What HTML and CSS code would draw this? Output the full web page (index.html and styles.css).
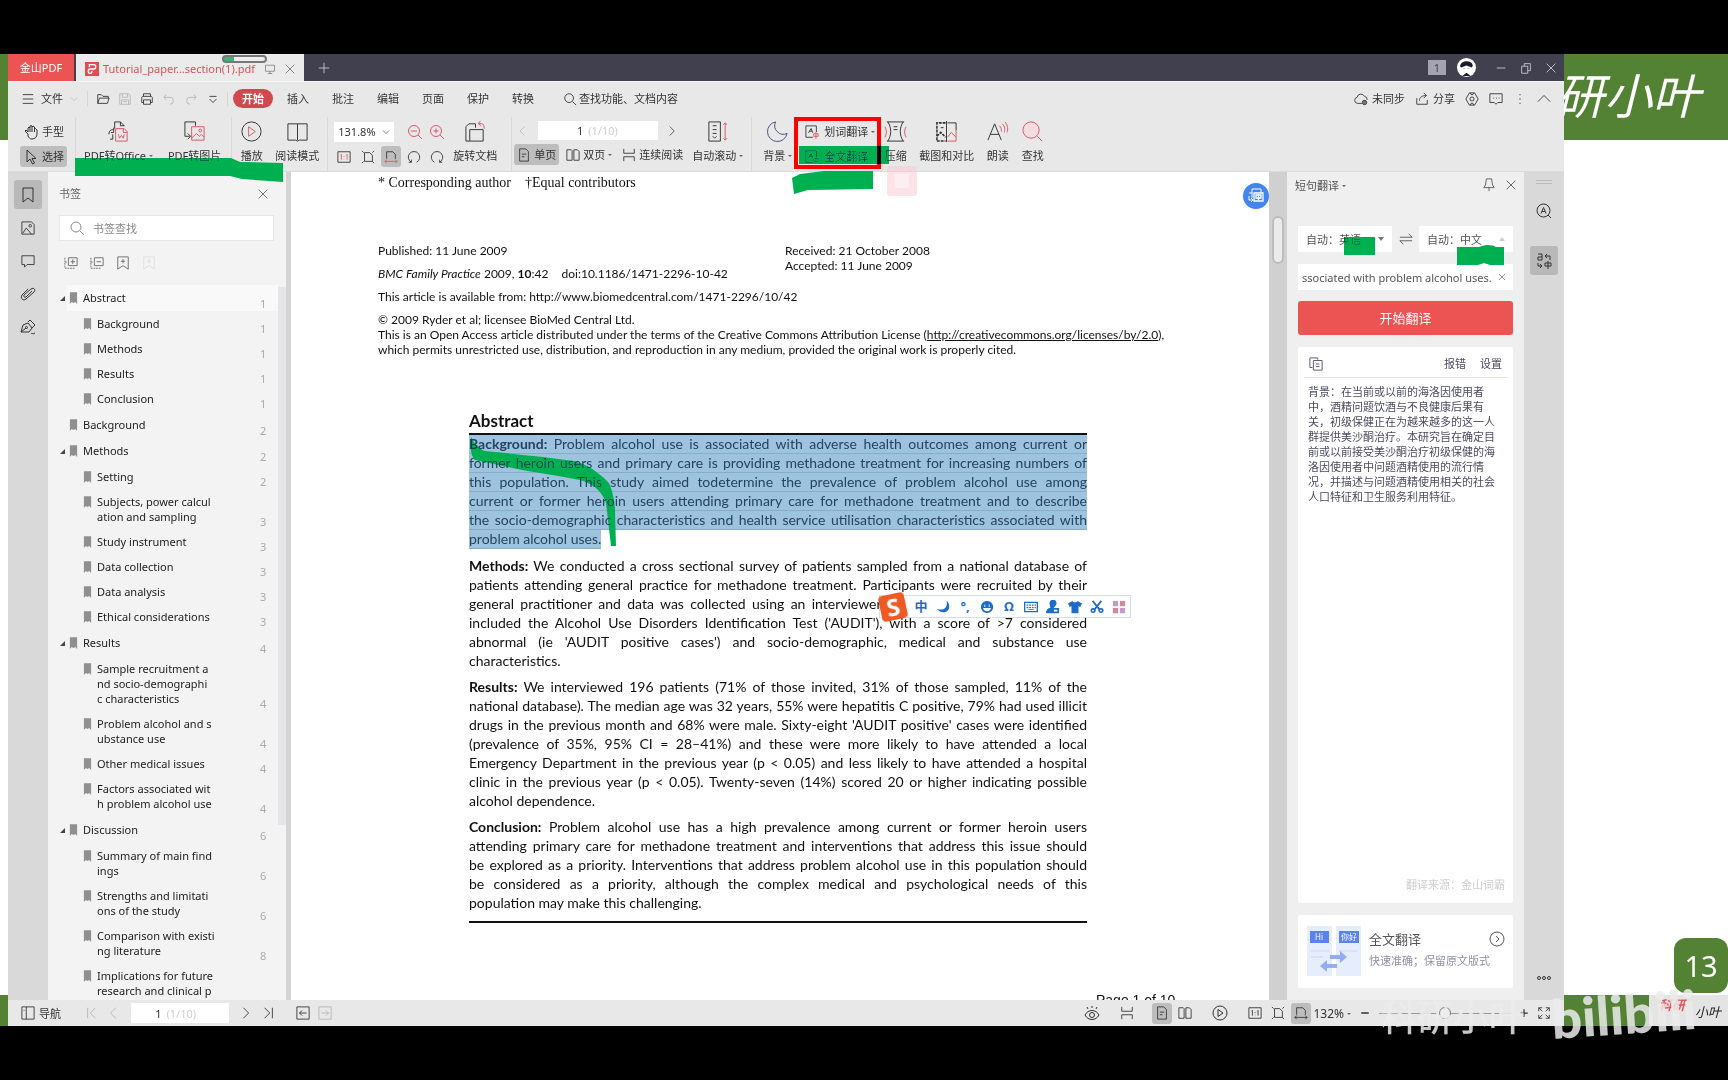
FILE: index.html
```html
<!DOCTYPE html>
<html lang="zh-CN">

<head>
    <meta charset="UTF-8">
    <meta name="viewport" content="width=device-width, initial-scale=1.0">
    <title>Tutorial_paper...section(1).pdf</title>
    <link rel="stylesheet" href="styles.css">
</head>

<body>
    <!-- icon sheet -->
    <svg class="sheet" aria-hidden="true">
        <symbol id="menu" viewBox="0 0 16 16"><path d="M2 3h12M2 8h12M2 13h12" /></symbol>
        <symbol id="down" viewBox="0 0 16 16"><path d="M3 5.500l5 5 5-5" /></symbol>
        <symbol id="up" viewBox="0 0 16 16"><path d="M1 11l7-7 7 7" /></symbol>
        <symbol id="left" viewBox="0 0 16 16"><path d="M10 2L4 8l6 6" /></symbol>
        <symbol id="right" viewBox="0 0 16 16"><path d="M5 2l6 6-6 6" /></symbol>
        <symbol id="first" viewBox="0 0 16 16"><path d="M3 2v12M12 2L6 8l6 6" /></symbol>
        <symbol id="last" viewBox="0 0 16 16"><path d="M13 2v12M4 2l6 6-6 6" /></symbol>
        <symbol id="close" viewBox="0 0 16 16"><path d="M3 3l10 10M13 3L3 13" /></symbol>
        <symbol id="plus" viewBox="0 0 16 16"><path d="M8 2v12M2 8h12" /></symbol>
        <symbol id="minus" viewBox="0 0 16 16"><path d="M3 8h10" /></symbol>
        <symbol id="restore" viewBox="0 0 16 16"><path d="M3 6h7v8H3zM6 6V3h7v8h-3" /></symbol>
        <symbol id="screen" viewBox="0 0 16 16"><path d="M2 3h12v8H2zM8 11v3M5 14h6" /></symbol>
        <symbol id="open" viewBox="0 0 16 16"><path d="M2 13V3h4l2 2h6v2M2 13l2-6h11l-2 6z" /></symbol>
        <symbol id="save" viewBox="0 0 16 16"><path d="M2 2h10l2 2v10H2zM5 2v4h6V2M4 14V9h8v5M6 11h4" /></symbol>
        <symbol id="print" viewBox="0 0 16 16"><path d="M4 5V2h8v3M4 12H2V6l1-1h10l1 1v6h-2M4 9h8v5H4z" /></symbol>
        <symbol id="undo" viewBox="0 0 16 16"><path d="M5 3L2 6l3 3M2 6h7a4 4 0 0 1 0 8" /></symbol>
        <symbol id="redo" viewBox="0 0 16 16"><path d="M11 3l3 3-3 3M14 6H7a4 4 0 0 0 0 8" /></symbol>
        <symbol id="more" viewBox="0 0 16 16"><path d="M4 5h8M4 8l4 4 4-4" /></symbol>
        <symbol id="search" viewBox="0 0 16 16"><circle cx="7" cy="7" r="5" /><path d="M11 11l4 4" /></symbol>
        <symbol id="cloud" viewBox="0 0 16 16"><path d="M9 13H4a3.500 3.500 0 0 1-.5-6.900A4.500 4.500 0 0 1 12 5a3.500 3.500 0 0 1 3 4" /><circle cx="12" cy="12" r="2.500" fill="#777" /></symbol>
        <symbol id="share" viewBox="0 0 16 16"><path d="M2 7v7h12V9M5 10c0-4 3-6 8-6M10 1l3 3-3 3" /></symbol>
        <symbol id="gear" viewBox="0 0 16 16"><path d="M5 1h6l4 7-4 7H5L1 8zM6 1l1 2h2l1-2M6 15l1-2h2l1 2" /><circle cx="8" cy="8" r="2.300" /></symbol>
        <symbol id="chat" viewBox="0 0 16 16"><path d="M1 2h14v10h-5l-2 2-2-2H1zM5 7h1M8 7h1M11 7h1" /></symbol>
        <symbol id="kebab" viewBox="0 0 16 16"><path d="M7.500 3h1M7.500 8h1M7.500 13h1" stroke-width="1.500" /></symbol>
        <symbol id="hand" viewBox="0 0 16 16"><path d="M5 10L2 7l1-1 2 2V4l1-1 1 1V2l1.500-.5L9 3l1-1 1.500 1v2l1-.5L14 6v4c0 3-2 5-5 5-2 0-3-1-4-3zM7 4v4M9 3v5M11.500 4v4" /></symbol>
        <symbol id="arrow" viewBox="0 0 16 16"><path d="M4 1v12l3-3 2.500 5 2-1L9 9.500h4z" /></symbol>
        <symbol id="office" viewBox="0 0 24 24"><path d="M8 9V2h6l4 4M14 2v4h4M2 15c0-4 2-5 5-5M7 8v5H4M6 15v5H3" /><path class="red" d="M9 9h9l3 3v10H9zM17 9v4h4M12 15l1 4 2-3 2 3 1-4" /></symbol>
        <symbol id="toimg" viewBox="0 0 24 24"><path d="M13 6V2H2v15h5M5 14l3 3-3 3" /><path class="red" d="M9 7h13v14H9zM9 19l5-5 3 3 2-2 3 3" /><circle class="red" cx="18" cy="11" r="1.500" /></symbol>
        <symbol id="play" viewBox="0 0 24 24"><circle cx="12" cy="12" r="10" /><path class="red" d="M9 7l7 5-7 5z" /></symbol>
        <symbol id="book" viewBox="0 0 24 24"><path d="M12 4H2v17h8l2 1 2-1h8V4H12v17" /></symbol>
        <symbol id="zoomout" viewBox="0 0 16 16"><circle class="red" cx="7" cy="7" r="5.500" /><path class="red" d="M11 11l4 4M4 7h6" /></symbol>
        <symbol id="zoomin" viewBox="0 0 16 16"><circle class="red" cx="7" cy="7" r="5.500" /><path class="red" d="M11 11l4 4M4.500 7h5M7 4.500v5" /></symbol>
        <symbol id="one" viewBox="0 0 16 16"><path d="M1 2h14v12H1z" /><path class="red" d="M4 6l1-1v6M10.500 6l1-1v6M8 7v1M8 10v.5" /></symbol>
        <symbol id="fit" viewBox="0 0 16 16"><path d="M4 3h6l3 3v7H4zM1 1l2 2M15 1l-2 2M1 15l2-2M15 15l-2-2" /></symbol>
        <symbol id="wide" viewBox="0 0 16 16"><path d="M3 10V2h7l3 3v5" /><path class="red" d="M1 13h14M3 11l-2 2 2 2M13 11l2 2-2 2" /></symbol>
        <symbol id="rotl" viewBox="0 0 16 16"><path d="M5 14a6.500 6.500 0 1 1 6 0M2 14h3v-3" /></symbol>
        <symbol id="rotr" viewBox="0 0 16 16"><path d="M11 14a6.500 6.500 0 1 0-6 0M14 14h-3v-3" /></symbol>
        <symbol id="rotdoc" viewBox="0 0 24 24"><path d="M12 8V4H5L2 7v15h4M6 10h14v12H6z" /><path class="red" d="M17 1l-2 3 3 2M15 4c4-1 6 0 6 5" /></symbol>
        <symbol id="page" viewBox="0 0 16 16"><path d="M3 1h7l3 3v11H3zM5.500 7h5M5.500 10h3" /></symbol>
        <symbol id="pages" viewBox="0 0 16 16"><path d="M1 2h5l1 1v11H1zM9 2h4l2 2v10H9z" /></symbol>
        <symbol id="cont" viewBox="0 0 16 16"><path d="M2 1v5h12V1M2 15v-5h12v5" /></symbol>
        <symbol id="scroll" viewBox="0 0 24 24"><path d="M3 2h12v20H3zM7 6h4M7 10h4M7 14h4M7 17l2 2 2-2" /><path class="red" d="M20 3v18M18 5l2-2 2 2M18 19l2 2 2-2" /></symbol>
        <symbol id="moon" viewBox="0 0 24 24"><path d="M10 2a9 9 0 0 0 12 12A10.300 10.300 0 1 1 10 2z" stroke="#45507a" /></symbol>
        <symbol id="trans" viewBox="0 0 16 16"><path d="M9 14H1V1h12v7M4 9l3-5 2 5M5 7h3" /><path class="red" d="M10 10h5v3h-5zM12.500 8v8" /></symbol>
        <symbol id="translate" viewBox="0 0 16 16"><path d="M4 10V1h9v4M4 5H1M1 8v4h4M3 10l2 2-2 2" /><path d="M6 5h9v8H6zM8 7h5v3H8zM10.500 6v6" stroke-width="1.300" /></symbol>
        <symbol id="press" viewBox="0 0 24 24"><path d="M3 2h18M3 22h18M4 2c4 6 4 14 0 20M20 2c-4 6-4 14 0 20M10 7h4M10 10h4" /><path class="red" d="M1 7c2 4 2 7 0 11M23 7c-2 4-2 7 0 11" /></symbol>
        <symbol id="shot" viewBox="0 0 24 24"><path d="M11 3H2v19h9M2 17l4-4 5 5" stroke-width="1.600" stroke-dasharray="3 1" /><path d="M12 1v22M6 8h3" /><path d="M13 3h9v8" /><path class="red" d="M22 11v11h-9M13 18l4-5 5 5" /></symbol>
        <symbol id="read" viewBox="0 0 24 24"><path d="M2 21L9 4l7 17M4.500 15h9" /><path class="red" d="M14 6c2 2 2 3 2 6M17 4c3 3 3 6 2 9M20 2c3 4 3 8 2 11" /></symbol>
        <symbol id="find" viewBox="0 0 24 24"><circle cx="10.500" cy="10.500" r="8.500" class="red" fill="#f5dcdf" /><path class="red" d="M17 17l5 5" /></symbol>
        <symbol id="mark" viewBox="0 0 16 16"><path d="M3 1h10v14l-5-4-5 4z" /></symbol>
        <symbol id="image" viewBox="0 0 16 16"><path d="M1 1h11l3 3v11H1zM2 14l4-6 6 7" /><circle cx="10.500" cy="5.500" r="1.500" /></symbol>
        <symbol id="note" viewBox="0 0 16 16"><path d="M1 2h14v10H7l-3 3v-3H1z" /></symbol>
        <symbol id="clip" viewBox="0 0 16 16"><path d="M12 5l-6 6c-1.500 1-3-1-2-2l7-6c3-2 5 1 3 3l-8 7c-3 2.500-6-1-4-4l6-6" /></symbol>
        <symbol id="pen" viewBox="0 0 16 16"><path d="M1 13l2-7 5-2 4 5-3 4zM8 3l2-2 5 5-3 3M1 13l5-4M11 15c1-2 2 1 4-1" /><circle cx="6.500" cy="8.500" r="1" /></symbol>
        <symbol id="expand" viewBox="0 0 16 16"><path d="M5 2h10v9H5zM10 4v5M7.500 6.500h5" /><path d="M1 2v12h12M1 7h2" stroke-dasharray="2 1" /></symbol>
        <symbol id="fold" viewBox="0 0 16 16"><path d="M5 2h10v9H5zM7.500 6.500h5" /><path d="M1 2v12h12M1 7h2" stroke-dasharray="2 1" /></symbol>
        <symbol id="addmark" viewBox="0 0 16 16"><path d="M2 1h12v14l-6-4-6 4zM8 3.500v5M5.500 6h5" /></symbol>
        <symbol id="flag" viewBox="0 0 10 14"><path d="M1 0h8v13l-2-2-2 1-2-1-2 2z" fill="#8f8f8f" stroke="none" /></symbol>
        <symbol id="pin" viewBox="0 0 16 16"><path d="M5 1h6l1 7 2 3H2l2-3zM8 11v4" /></symbol>
        <symbol id="swap" viewBox="0 0 16 16"><path d="M1 6h14l-4-4M15 10H1l4 4" /></symbol>
        <symbol id="copy" viewBox="0 0 16 16"><path d="M4 12H1V1h9v2M5 4h10v11H5zM8 8h4M8 11h4" /></symbol>
        <symbol id="asearch" viewBox="0 0 16 16"><circle cx="7.500" cy="7.500" r="6.500" /><path d="M5 10.500l2.500-6 2.500 6M6 8.500h3M12 12l3 3" /></symbol>
        <symbol id="lang" viewBox="0 0 16 16"><path d="M2 1h4v6H2V4h4M9 3h5v4M11 1L9 3l2 2M2 10v3h4M4 11l2 2-2 2M9 10h6v3H9zM12 8v8" /></symbol>
        <symbol id="dots" viewBox="0 0 16 16"><circle cx="3" cy="8" r="1.500" /><circle cx="8" cy="8" r="1.500" /><circle cx="13" cy="8" r="1.500" /></symbol>
        <symbol id="circright" viewBox="0 0 16 16"><circle cx="8" cy="8" r="7" /><path d="M7 5l3 3-3 3" /></symbol>
        <symbol id="circplay" viewBox="0 0 16 16"><circle cx="8" cy="8" r="7" /><path d="M6 4.500l5 3.500-5 3.500z" /></symbol>
        <symbol id="side" viewBox="0 0 16 16"><path d="M1 1h14v14H1zM6 1v14M3 5h1" /></symbol>
        <symbol id="back" viewBox="0 0 16 16"><path d="M1 1h14v14H1zM12 8H4M7 5L4 8l3 3" /></symbol>
        <symbol id="forth" viewBox="0 0 16 16"><path d="M1 1h14v14H1zM4 8h8M9 5l3 3-3 3" /></symbol>
        <symbol id="eye" viewBox="0 0 16 16"><path d="M1 10c3-6 11-6 14 0-3 6-11 6-14 0zM8 1v2M3 2l1 2M13 2l-1 2" /><circle cx="8" cy="10" r="2.500" /></symbol>
        <symbol id="full" viewBox="0 0 16 16"><path d="M2 6V2h4M2 2l4 4M10 2h4v4M14 2l-4 4M2 10v4h4M2 14l4-4M14 10v4h-4M14 14l-4-4" /></symbol>
    </svg>

    <div class="slide">
        <div class="band">科研小叶</div>
        <div class="pageno">13</div>
        <div class="foot">
            <div class="brand"><b>科研</b><span>小叶</span></div>
        </div>

        <div class="window">
            <!-- title bar with tabs -->
            <div class="titlebar">
                <button class="home">金山PDF</button>
                <div class="tab">
                    <svg class="pdf" viewBox="0 0 16 16"><path d="M0 0h16v16H0z" fill="#e64b50" stroke="none" /><path d="M5 6V3h5c3 0 3 5 0 5H6c-3 0-3 5 0 5 2 0 2-2 2-3" stroke="#fff" stroke-width="1.500" /></svg>
                    <span class="tabname">Tutorial_paper...section(1).pdf</span>
                    <svg class="i12"><use href="#screen" /></svg>
                    <button class="ib"><svg class="i14"><use href="#close" /></svg></button>
                    <i class="pill"></i>
                </div>
                <button class="ib add"><svg class="i14"><use href="#plus" /></svg></button>
                <div class="wincontrols">
                    <span class="count">1</span>
                    <svg class="avatar" viewBox="0 0 18 18"><circle cx="9" cy="9" r="9" fill="#fff" stroke="none" /><path d="M3 8c0-6 11-7 12-1l-1 2-5-2-5 2zM5 17l4-3 4 3z" fill="#1b1b2b" stroke="none" /><path d="M6 10h2M10 10h2" /></svg>
                    <button class="ib"><svg class="i14"><use href="#minus" /></svg></button>
                    <button class="ib"><svg class="i14"><use href="#restore" /></svg></button>
                    <button class="ib"><svg class="i14"><use href="#close" /></svg></button>
                </div>
            </div>

            <!-- menu -->
            <div class="menubar">
                <button class="ib file"><svg class="i14"><use href="#menu" /></svg>文件<svg class="i10 pale"><use href="#down" /></svg></button>
                <div class="quick">
                    <button class="ib"><svg class="i14"><use href="#open" /></svg></button>
                    <button class="ib pale"><svg class="i14"><use href="#save" /></svg></button>
                    <button class="ib"><svg class="i14"><use href="#print" /></svg></button>
                    <button class="ib pale"><svg class="i14"><use href="#undo" /></svg></button>
                    <button class="ib pale"><svg class="i14"><use href="#redo" /></svg></button>
                    <button class="ib"><svg class="i14"><use href="#more" /></svg></button>
                </div>
                <nav class="menus">
                    <button class="active">开始</button>
                    <button>插入</button>
                    <button>批注</button>
                    <button>编辑</button>
                    <button>页面</button>
                    <button>保护</button>
                    <button>转换</button>
                </nav>
                <button class="ib"><svg class="i14"><use href="#search" /></svg>查找功能、文档内容</button>
                <div class="account">
                    <button class="ib"><svg class="i14"><use href="#cloud" /></svg>未同步</button>
                    <button class="ib"><svg class="i14"><use href="#share" /></svg>分享</button>
                    <button class="ib"><svg class="i14"><use href="#gear" /></svg></button>
                    <button class="ib"><svg class="i14"><use href="#chat" /></svg></button>
                    <button class="ib"><svg class="i14"><use href="#kebab" /></svg></button>
                    <button class="ib"><svg class="i14"><use href="#up" /></svg></button>
                </div>
            </div>

            <!-- ribbon -->
            <div class="ribbon">
                <div class="group">
                    <div class="stack">
                        <button class="mini"><svg class="i16"><use href="#hand" /></svg>手型</button>
                        <button class="mini on"><svg class="i16"><use href="#arrow" /></svg>选择</button>
                    </div>
                </div>
                <div class="group spaced">
                    <button class="tool"><svg><use href="#office" /></svg><span class="drop">PDF转Office</span></button>
                    <button class="tool"><svg><use href="#toimg" /></svg><span>PDF转图片</span></button>
                </div>
                <div class="group">
                    <button class="tool"><svg><use href="#play" /></svg><span>播放</span></button>
                    <button class="tool"><svg><use href="#book" /></svg><span>阅读模式</span></button>
                </div>
                <div class="group zoomgroup">
                    <div class="stack">
                        <div class="line">
                            <label class="zoom"><select aria-label="缩放"><option>131.8%</option></select><svg class="i10"><use href="#down" /></svg></label>
                            <button class="sq"><svg class="i16"><use href="#zoomout" /></svg></button>
                            <button class="sq"><svg class="i16"><use href="#zoomin" /></svg></button>
                        </div>
                        <div class="line between">
                            <button class="sq"><svg class="i14"><use href="#one" /></svg></button>
                            <button class="sq"><svg class="i14"><use href="#fit" /></svg></button>
                            <button class="sq on"><svg class="i14"><use href="#wide" /></svg></button>
                            <button class="sq"><svg class="i14"><use href="#rotl" /></svg></button>
                            <button class="sq"><svg class="i14"><use href="#rotr" /></svg></button>
                        </div>
                    </div>
                    <button class="tool"><svg><use href="#rotdoc" /></svg><span>旋转文档</span></button>
                </div>
                <div class="group">
                    <div class="stack">
                        <div class="line between turn">
                            <button class="ib pale"><svg class="i12"><use href="#left" /></svg></button>
                            <label class="pager"><input type="text" value="1" aria-label="页码"><span>(1/10)</span></label>
                            <button class="ib"><svg class="i12"><use href="#right" /></svg></button>
                        </div>
                        <div class="line modes">
                            <button class="mini on"><svg class="i14"><use href="#page" /></svg>单页</button>
                            <button class="mini"><svg class="i14"><use href="#pages" /></svg><span class="drop">双页</span></button>
                            <button class="mini"><svg class="i14"><use href="#cont" /></svg>连续阅读</button>
                        </div>
                    </div>
                    <button class="tool"><svg><use href="#scroll" /></svg><span class="drop">自动滚动</span></button>
                </div>
                <div class="group end">
                    <button class="tool"><svg><use href="#moon" /></svg><span class="drop">背景</span></button>
                    <div class="stack">
                        <button class="mini"><svg class="i14"><use href="#trans" /></svg><span class="drop">划词翻译</span></button>
                        <button class="mini"><svg class="i14"><use href="#trans" /></svg>全文翻译</button>
                    </div>
                    <button class="tool"><svg><use href="#press" /></svg><span>压缩</span></button>
                    <button class="tool"><svg><use href="#shot" /></svg><span>截图和对比</span></button>
                    <button class="tool"><svg><use href="#read" /></svg><span>朗读</span></button>
                    <button class="tool"><svg><use href="#find" /></svg><span>查找</span></button>
                </div>
            </div>

            <div class="work">
                <div class="rail">
                    <button class="railbtn on"><svg class="i16"><use href="#mark" /></svg></button>
                    <button class="railbtn"><svg class="i14"><use href="#image" /></svg></button>
                    <button class="railbtn"><svg class="i14"><use href="#note" /></svg></button>
                    <button class="railbtn"><svg class="i16"><use href="#clip" /></svg></button>
                    <button class="railbtn"><svg class="i16"><use href="#pen" /></svg></button>
                </div>

                <!-- bookmarks -->
                <div class="bookmarks">
                    <div class="phead"><span>书签</span><button class="ib"><svg class="i14"><use href="#close" /></svg></button></div>
                    <label class="find"><svg class="i16"><use href="#search" /></svg><input type="text" placeholder="书签查找"></label>
                    <div class="marktools">
                        <button class="ib"><svg class="i14"><use href="#expand" /></svg></button>
                        <button class="ib"><svg class="i14"><use href="#fold" /></svg></button>
                        <button class="ib"><svg class="i14"><use href="#addmark" /></svg></button>
                        <button class="ib faint"><svg class="i14"><use href="#addmark" /></svg></button>
                    </div>
                    <div class="treebox">
                        <ul class="tree">
                            <li>
                                <div class="row open sel"><svg class="flag"><use href="#flag" /></svg><span>Abstract</span><em>1</em></div>
                                <ul>
                                    <li class="row"><svg class="flag"><use href="#flag" /></svg><span>Background</span><em>1</em></li>
                                    <li class="row"><svg class="flag"><use href="#flag" /></svg><span>Methods</span><em>1</em></li>
                                    <li class="row"><svg class="flag"><use href="#flag" /></svg><span>Results</span><em>1</em></li>
                                    <li class="row"><svg class="flag"><use href="#flag" /></svg><span>Conclusion</span><em>1</em></li>
                                </ul>
                            </li>
                            <li>
                                <div class="row"><svg class="flag"><use href="#flag" /></svg><span>Background</span><em>2</em></div>
                            </li>
                            <li>
                                <div class="row open"><svg class="flag"><use href="#flag" /></svg><span>Methods</span><em>2</em></div>
                                <ul>
                                    <li class="row"><svg class="flag"><use href="#flag" /></svg><span>Setting</span><em>2</em></li>
                                    <li class="row"><svg class="flag"><use href="#flag" /></svg><span>Subjects, power calcul<br>ation and sampling</span><em>3</em></li>
                                    <li class="row"><svg class="flag"><use href="#flag" /></svg><span>Study instrument</span><em>3</em></li>
                                    <li class="row"><svg class="flag"><use href="#flag" /></svg><span>Data collection</span><em>3</em></li>
                                    <li class="row"><svg class="flag"><use href="#flag" /></svg><span>Data analysis</span><em>3</em></li>
                                    <li class="row"><svg class="flag"><use href="#flag" /></svg><span>Ethical considerations</span><em>3</em></li>
                                </ul>
                            </li>
                            <li>
                                <div class="row open"><svg class="flag"><use href="#flag" /></svg><span>Results</span><em>4</em></div>
                                <ul>
                                    <li class="row"><svg class="flag"><use href="#flag" /></svg><span>Sample recruitment a<br>nd socio-demographi<br>c characteristics</span><em>4</em></li>
                                    <li class="row"><svg class="flag"><use href="#flag" /></svg><span>Problem alcohol and s<br>ubstance use</span><em>4</em></li>
                                    <li class="row"><svg class="flag"><use href="#flag" /></svg><span>Other medical issues</span><em>4</em></li>
                                    <li class="row"><svg class="flag"><use href="#flag" /></svg><span>Factors associated wit<br>h problem alcohol use</span><em>4</em></li>
                                </ul>
                            </li>
                            <li>
                                <div class="row open"><svg class="flag"><use href="#flag" /></svg><span>Discussion</span><em>6</em></div>
                                <ul>
                                    <li class="row"><svg class="flag"><use href="#flag" /></svg><span>Summary of main find<br>ings</span><em>6</em></li>
                                    <li class="row"><svg class="flag"><use href="#flag" /></svg><span>Strengths and limitati<br>ons of the study</span><em>6</em></li>
                                    <li class="row"><svg class="flag"><use href="#flag" /></svg><span>Comparison with existi<br>ng literature</span><em>8</em></li>
                                    <li class="row"><svg class="flag"><use href="#flag" /></svg><span>Implications for future<br>research and clinical p</span><em></em></li>
                                </ul>
                            </li>
                        </ul>
                        <i class="treebar"></i>
                    </div>
                </div>

                <!-- document -->
                <div class="doc">
                    <div class="paper">
                        <p class="authors">* Corresponding author<span>†Equal contributors</span></p>
                        <div class="dates">
                            <div>
                                <p>Published: 11 June 2009</p>
                                <p class="jump"><i>BMC Family Practice</i> 2009, <b>10</b>:42 <span class="doi">doi:10.1186/1471-2296-10-42</span></p>
                            </div>
                            <div>
                                <p>Received: 21 October 2008</p>
                                <p>Accepted: 11 June 2009</p>
                            </div>
                        </div>
                        <p class="jump">This article is available from: http://www.biomedcentral.com/1471-2296/10/42</p>
                        <p class="jump">© 2009 Ryder et al; licensee BioMed Central Ltd.</p>
                        <p>This is an Open Access article distributed under the terms of the Creative Commons Attribution License (<a href="#">http://creativecommons.org/licenses/by/2.0</a>),</p>
                        <p>which permits unrestricted use, distribution, and reproduction in any medium, provided the original work is properly cited.</p>

                        <div class="abstract">
                            <h1>Abstract</h1>
                            <p class="hl">
                                <span><b>Background:</b> Problem alcohol use is associated with adverse health outcomes among current or</span>
                                <span>former heroin users and primary care is providing methadone treatment for increasing numbers of</span>
                                <span>this population. This study aimed todetermine the prevalence of problem alcohol use among</span>
                                <span>current or former heroin users attending primary care for methadone treatment and to describe</span>
                                <span>the socio-demographic characteristics and health service utilisation characteristics associated with</span>
                                <span>problem alcohol uses.</span>
                            </p>
                            <p>
                                <span><b>Methods:</b> We conducted a cross sectional survey of patients sampled from a national database of</span>
                                <span>patients attending general practice for methadone treatment. Participants were recruited by their</span>
                                <span>general practitioner and data was collected using an interviewer-administered questionnaire that</span>
                                <span>included the Alcohol Use Disorders Identification Test ('AUDIT'), with a score of &gt;7 considered</span>
                                <span>abnormal (ie 'AUDIT positive cases') and socio-demographic, medical and substance use</span>
                                <span>characteristics.</span>
                            </p>
                            <p>
                                <span><b>Results:</b> We interviewed 196 patients (71% of those invited, 31% of those sampled, 11% of the</span>
                                <span>national database). The median age was 32 years, 55% were hepatitis C positive, 79% had used illicit</span>
                                <span>drugs in the previous month and 68% were male. Sixty-eight 'AUDIT positive' cases were identified</span>
                                <span>(prevalence of 35%, 95% CI = 28–41%) and these were more likely to have attended a local</span>
                                <span>Emergency Department in the previous year (p &lt; 0.05) and less likely to have attended a hospital</span>
                                <span>clinic in the previous year (p &lt; 0.05). Twenty-seven (14%) scored 20 or higher indicating possible</span>
                                <span>alcohol dependence.</span>
                            </p>
                            <p>
                                <span><b>Conclusion:</b> Problem alcohol use has a high prevalence among current or former heroin users</span>
                                <span>attending primary care for methadone treatment and interventions that address this issue should</span>
                                <span>be explored as a priority. Interventions that address problem alcohol use in this population should</span>
                                <span>be considered as a priority, although the complex medical and psychological needs of this</span>
                                <span>population may make this challenging.</span>
                            </p>
                        </div>
                        <p class="folio">Page 1 of 10</p>
                    </div>
                    <button class="bubble"><svg class="i16"><use href="#translate" /></svg></button>
                </div>
                <div class="scroll"><i></i></div>

                <!-- translation -->
                <div class="translate">
                    <div class="thead"><button class="ib"><span class="drop">短句翻译</span></button><span class="grow"></span>
                        <button class="ib"><svg class="i14"><use href="#pin" /></svg></button>
                        <button class="ib"><svg class="i14"><use href="#close" /></svg></button>
                    </div>
                    <div class="langs">
                        <label><select aria-label="源语言"><option>自动：英语</option></select><i class="tri"></i></label>
                        <svg class="i14"><use href="#swap" /></svg>
                        <label><select aria-label="目标语言"><option>自动：中文</option></select><i class="tri flip"></i></label>
                    </div>
                    <div class="source"><input type="text" value="ssociated with problem alcohol uses." aria-label="原文"><button class="ib"><svg class="i10"><use href="#close" /></svg></button></div>
                    <button class="go">开始翻译</button>
                    <div class="card result">
                        <div class="rhead"><svg class="i14"><use href="#copy" /></svg><span class="grow"></span><a href="#">报错</a><a href="#">设置</a></div>
                        <p>背景：在当前或以前的海洛因使用者<br>中，酒精问题饮酒与不良健康后果有<br>关，初级保健正在为越来越多的这一人<br>群提供美沙酮治疗。本研究旨在确定目<br>前或以前接受美沙酮治疗初级保健的海<br>洛因使用者中问题酒精使用的流行情<br>况，并描述与问题酒精使用相关的社会<br>人口特征和卫生服务利用特征。</p>
                        <small>翻译来源：金山词霸</small>
                    </div>
                    <div class="card whole">
                        <svg class="thumb" viewBox="0 0 54 50">
                            <path d="M0 0h25v50H0zM29 0h25v50H29z" fill="#e6edfd" stroke="none" />
                            <path d="M3 5h19v12H3zM32 5h20v12H32z" fill="#5b83ee" stroke="none" />
                            <path d="M4 25h18M4 31h12M32 25h18" stroke="#ccd6f5" />
                            <path d="M23 29h10v-4l7 6-7 6v-4H23zM30 42H20v4l-7-6 7-6v4h10z" fill="#94acf0" stroke="none" />
                            <text x="8" y="14">Hi</text><text x="34" y="14">你好</text>
                        </svg>
                        <div class="grow"><h2>全文翻译</h2><p>快速准确；保留原文版式</p></div>
                        <button class="ib"><svg class="i16"><use href="#circright" /></svg></button>
                    </div>
                </div>
                <div class="rail right">
                    <i class="grip"></i>
                    <button class="railbtn"><svg class="i16"><use href="#asearch" /></svg></button>
                    <button class="railbtn on"><svg class="i16"><use href="#lang" /></svg></button>
                    <span class="grow"></span>
                    <button class="railbtn"><svg class="i16"><use href="#dots" /></svg></button>
                </div>
            </div>

            <!-- status bar -->
            <div class="status">
                <button class="ib nav"><svg class="i14"><use href="#side" /></svg>导航</button>
                <button class="ib pale"><svg class="i14"><use href="#first" /></svg></button>
                <button class="ib pale"><svg class="i14"><use href="#left" /></svg></button>
                <label class="pager"><input type="text" value="1" aria-label="当前页"><span>(1/10)</span></label>
                <button class="ib"><svg class="i14"><use href="#right" /></svg></button>
                <button class="ib"><svg class="i14"><use href="#last" /></svg></button>
                <button class="ib jumpback"><svg class="i14"><use href="#back" /></svg></button>
                <button class="ib pale"><svg class="i14"><use href="#forth" /></svg></button>
                <span class="grow"></span>
                <div class="view">
                    <button class="sq gap"><svg class="i16"><use href="#eye" /></svg></button>
                    <button class="sq gap"><svg class="i14"><use href="#cont" /></svg></button>
                    <button class="sq on"><svg class="i14"><use href="#page" /></svg></button>
                    <button class="sq gap"><svg class="i14"><use href="#pages" /></svg></button>
                    <button class="sq gap"><svg class="i16"><use href="#circplay" /></svg></button>
                    <button class="sq"><svg class="i14"><use href="#one" /></svg></button>
                    <button class="sq"><svg class="i14"><use href="#fit" /></svg></button>
                    <button class="sq on"><svg class="i14"><use href="#wide" /></svg></button>
                </div>
                <button class="ib pct"><span class="drop">132%</span></button>
                <button class="ib thick"><svg class="i12"><use href="#minus" /></svg></button>
                <input type="range" class="slider" value="50" aria-label="缩放比例">
                <button class="ib thick"><svg class="i10"><use href="#plus" /></svg></button>
                <button class="ib fullscreen"><svg class="i14"><use href="#full" /></svg></button>
            </div>

            <!-- marker strokes drawn over the page -->
            <i class="redbox"></i>
            <svg class="ink" width="1556" height="600" viewBox="8 54 1556 600">
                <path d="M75 158H231l9 4 43 1v19l-41-3-12-3H75z" />
                <path d="M799 146h90v18h-90z" />
                <path d="M792 178l8-4 24-3h49v18l-65 1-14 4z" />
                <path d="M471 437c4 8 8 12 14 14l58 6 31 4c10 3 16 6 21 10 8 6 13 10 15 14 4 12 5 20 5 27l1 34h-5l-5-43c-2-6-5-10-8-13-5-5-11-8-18-10l-16-3-42-7-47-10c-4-4-5-10-4-23z" />
                <path d="M1344 237h31v18h-31z" />
                <path d="M1457 247h22c8-3 14-2 17 0h8v18h-14l-6-2-6 2h-21z" />
            </svg>
            <i class="ghost"></i>

            <!-- input method bar -->
            <div class="ime">
                <span class="slogo">S</span>
                <b>中</b>
                <svg viewBox="0 0 16 16"><path d="M12 1c2 8-4 12-11 9 5 7 15 4 14-3 0-3-1-5-3-6z" /></svg>
                <b>°,</b>
                <svg viewBox="0 0 16 16"><path d="M8 1a7 7 0 1 0 .1 0zM5 5h1v3H5zM10 5h1v3h-1zM3.500 9h9c-1 5-8 5-9 0z" fill-rule="evenodd" /></svg>
                <b>Ω</b>
                <svg viewBox="0 0 16 16"><path d="M0 2h16v12H0zM1.500 3.500v9h13v-9zM3 5h2v1.500H3zM6 5h2v1.500H6zM9 5h2v1.500H9zM12 5h1.500v1.500H12zM3 8h2v1.500H3zM6 8h2v1.500H6zM9 8h2v1.500H9zM12 8h1.500v1.500H12zM5 10.500h6v1H5z" fill-rule="evenodd" /></svg>
                <svg viewBox="0 0 16 16"><path d="M4 4a4 4 0 1 1 6 3l-1 2h6v6H0c0-4 2-6 5-6zM9 11v2h4v-2z" fill-rule="evenodd" /></svg>
                <svg viewBox="0 0 16 16"><path d="M5 1c1 2 5 2 6 0l5 3-2 4-2-1v8H4V7L2 8 0 4z" /></svg>
                <svg viewBox="0 0 16 16"><path d="M3 1l8 10M13 1L5 11" stroke="#1c6dc9" stroke-width="2" /><path d="M3.500 9a3 3 0 1 0 .1 0zM3.500 11a1 1 0 1 1-.1 0zM12.500 9a3 3 0 1 0 .1 0zM12.500 11a1 1 0 1 1-.1 0z" fill-rule="evenodd" /></svg>
                <svg viewBox="0 0 16 16"><path d="M1 1h6v6H1zM9 9h6v6H9z" fill="#c39bc9" /><path d="M9 1h6v6H9zM1 9h6v6H1z" fill="#d08a9c" /></svg>
            </div>
        </div>
    </div>
    <div class="watermark"><span>科研小叶</span><b>bilibili</b></div>
</body>

</html>
```
FILE: styles.css
```css
* {
    padding: 0;
    margin: 0;
    box-sizing: border-box;
}

body {
    height: 100vh;
    padding: 54px 0;
    background-color: black;
    font-family: "Noto Sans", "Noto Sans CJK SC", sans-serif;
    font-size: 11px;
    line-height: 15px;
    color: #333;
    overflow: hidden;
    position: relative;
}

button,
input,
select {
    font: inherit;
    color: inherit;
    border: none;
    background: none;
    outline: none;
    min-width: 0;
}

select {
    appearance: none;
}

ul {
    list-style: none;
}

svg {
    fill: none;
    stroke: currentColor;
    stroke-width: 1;
    flex: none;
}

.sheet {
    position: absolute;
    width: 0;
    height: 0;
}

.red {
    stroke: var(--accent, #d8596a);
}

.i10 {
    width: 10px;
    height: 10px;
}

.i12 {
    width: 12px;
    height: 12px;
}

.i14 {
    width: 14px;
    height: 14px;
}

.i16 {
    width: 16px;
    height: 16px;
}

.grow {
    flex: 1;
}

/* slide behind the window */
.slide {
    position: relative;
    height: 100%;
    background-color: white;
    padding: 0 164px 0 8px;
}

.band {
    position: absolute;
    top: 0;
    left: 0;
    right: 0;
    height: 86px;
    padding-right: 28px;
    background-color: #548235;
    color: white;
    font-size: 48px;
    line-height: 84px;
    font-style: italic;
    text-align: right;
}

.pageno {
    position: absolute;
    right: 0;
    bottom: 33px;
    width: 54px;
    height: 55px;
    border-radius: 12px;
    background-color: #548235;
    color: white;
    font-size: 29px;
    line-height: 55px;
    text-align: center;
}

.foot {
    position: absolute;
    left: 0;
    right: 0;
    bottom: 0;
    height: 31px;
    background-color: #548235;
    display: flex;
    justify-content: flex-end;
}

.brand {
    width: 79px;
    background-color: #e4e4e4;
    display: flex;
    justify-content: space-between;
    padding: 3px 7px 0 10px;
    font-size: 13px;
    font-style: italic;
    color: #222;
}

.brand b {
    color: #e2555f;
}

.brand span {
    padding-top: 7px;
}

.window {
    position: relative;
    height: 100%;
    display: flex;
    flex-direction: column;
    background-color: #e8e8e8;
}

.ib {
    display: flex;
    align-items: center;
    gap: 4px;
    white-space: nowrap;
}

.pale {
    color: #b5b5b5;
}

.faint {
    color: #dedede;
}

.on {
    background-color: #bdbdbd;
    border-radius: 3px;
}

.drop::after {
    content: "";
    display: inline-block;
    margin-left: 3px;
    vertical-align: 3px;
    border: 2px solid transparent;
    border-top-color: #666;
    border-bottom: none;
}

/* title bar */
.titlebar {
    height: 28px;
    display: flex;
    background-color: #40404f;
    border-bottom: 1px solid #f4f4f4;
    color: #c8c8d0;
}

.home {
    width: 66px;
    background-color: #ec5453;
    color: white;
}

.tab {
    position: relative;
    width: 228px;
    margin-left: 2px;
    padding: 2px 7px 0 9px;
    display: flex;
    align-items: center;
    gap: 4px;
    background-color: #ebebeb;
    color: #777;
}

.pdf {
    width: 14px;
    height: 14px;
}

.tabname {
    flex: 1;
    color: #d9525a;
    white-space: nowrap;
}

.tab .ib {
    padding-left: 3px;
}

.pill {
    position: absolute;
    left: 146px;
    top: 1px;
    width: 45px;
    height: 8px;
    border: 2px solid #777;
    border-radius: 4px;
    background: linear-gradient(90deg, #3db778 10px, #eee 10px);
}

.add {
    margin-left: 13px;
}

.wincontrols {
    margin-left: auto;
    display: flex;
    align-items: center;
    gap: 11px;
    padding-right: 6px;
}

.count {
    width: 18px;
    background-color: #a4a4b0;
    color: #40404f;
    text-align: center;
}

.avatar {
    width: 19px;
    height: 19px;
    margin-right: 7px;
}

/* menu bar */
.menubar {
    height: 33px;
    padding: 0 13px 0 13px;
    display: flex;
    align-items: center;
    flex: none;
}

.file {
    gap: 6px;
    padding-right: 8px;
    border-right: 1px solid #d6d6d6;
}

.quick {
    display: flex;
    gap: 8px;
    padding: 0 7px 0 8px;
    border-right: 1px solid #d6d6d6;
}

.menus {
    display: flex;
    gap: 5px;
    padding: 0 20px 0 5px;
}

.menus button {
    width: 40px;
    height: 19px;
}

.menus .active {
    background-color: #d1484e;
    border-radius: 10px;
    color: white;
    font-weight: bold;
}

.menubar > .ib:not(.file) {
    gap: 2px;
}

.account {
    margin-left: auto;
    display: flex;
    gap: 10px;
}

/* ribbon */
.ribbon {
    height: 57px;
    flex: none;
    display: flex;
    padding: 2px 0 0 12px;
    border-bottom: 1px solid #dcdcdc;
}

.group {
    display: flex;
    align-items: flex-start;
    padding: 0 2px;
    border-right: 1px solid #dadada;
}

.group:first-child {
    padding: 0 8px 0 0;
}

.group.end {
    padding-left: 5px;
    border: none;
}

.spaced {
    gap: 3px;
    padding-right: 4px;
}

.zoomgroup {
    padding: 0 8px 0 6px;
}

.tool {
    padding: 3px 6px 0;
    display: flex;
    flex-direction: column;
    align-items: center;
    gap: 5px;
    white-space: nowrap;
}

.tool svg {
    width: 23px;
    height: 23px;
}

.stack {
    display: flex;
    flex-direction: column;
    gap: 4px;
    padding-top: 4px;
}

.end .stack {
    padding-left: 4px;
}

.end .mini {
    gap: 5px;
}

.line {
    display: flex;
    align-items: center;
    gap: 2px;
}

.between {
    justify-content: space-between;
}

.modes {
    gap: 4px;
}

.mini {
    height: 21px;
    padding: 0 3px;
    display: flex;
    align-items: center;
    gap: 3px;
    white-space: nowrap;
}

.sq {
    width: 20px;
    height: 21px;
    display: flex;
    align-items: center;
    justify-content: center;
}

.zoom {
    width: 60px;
    height: 20px;
    margin-right: 9px;
    padding: 0 3px 0 4px;
    display: flex;
    align-items: center;
    background-color: white;
}

.zoom select {
    flex: 1;
}

.turn {
    padding: 0 8px 0 3px;
}

.pager {
    width: 120px;
    height: 19px;
    padding-right: 4px;
    display: flex;
    align-items: center;
    justify-content: center;
    gap: 5px;
    background-color: white;
}

.pager input {
    width: 20px;
    text-align: right;
}

.pager span {
    width: 40px;
    color: #cfcfcf;
}

/* work area */
.work {
    flex: 1;
    min-height: 0;
    display: flex;
}

.rail {
    width: 40px;
    padding: 8px 0;
    background-color: #d9d9d9;
    display: flex;
    flex-direction: column;
    align-items: center;
    gap: 4px;
}

.railbtn {
    width: 28px;
    height: 29px;
    display: flex;
    align-items: center;
    justify-content: center;
}

.railbtn.on {
    background-color: #b8b8b8;
}

.rail.right .railbtn.on {
    margin-top: 17px;
}

.grip {
    width: 16px;
    height: 4px;
    margin-bottom: 8px;
    border: 1px solid #bbb;
    border-width: 1px 0;
}

.bookmarks {
    width: 243px;
    display: flex;
    flex-direction: column;
    background-color: #f3f3f3;
    border-right: 5px solid #d4d4d4;
    padding-left: 11px;
}

.phead {
    height: 43px;
    padding-right: 16px;
    display: flex;
    align-items: center;
    justify-content: space-between;
    color: #666;
}

.find {
    height: 26px;
    margin-right: 12px;
    padding: 0 9px;
    display: flex;
    align-items: center;
    gap: 8px;
    background-color: white;
    border: 1px solid #e6e6e6;
    color: #888;
}

.find input::placeholder {
    color: #888;
}

.marktools {
    display: flex;
    gap: 12px;
    padding: 15px 5px;
    color: #666;
}

.treebox {
    flex: 1;
    min-height: 0;
    display: flex;
    overflow: hidden;
}

.tree {
    flex: 1;
    color: #222;
}

.tree ul {
    padding: 0 0 1px 14px;
}

.row {
    display: flex;
    align-items: flex-start;
    padding-left: 10px;
}

.row .flag {
    width: 9px;
    height: 13px;
    margin: 7px 5px 0 0;
}

.row span {
    flex: 1;
    padding: 5px 0;
    white-space: nowrap;
}

div.row span {
    padding-bottom: 6px;
}

.row em {
    width: 18px;
    align-self: flex-end;
    font-style: normal;
    color: #aaa;
}

.open {
    padding-left: 0;
}

/* corner triangle of an unfolded branch */
.open::before {
    content: "";
    margin: 11px 4px 0 1px;
    border-left: 5px solid transparent;
    border-bottom: 5px solid #444;
}

.sel {
    background: linear-gradient(90deg, transparent 8px, #f9f9f9 8px);
}

.treebar {
    width: 8px;
    height: 538px;
    margin-top: 2px;
    background-color: #e6e6e9;
}

/* document */
.doc {
    flex: 1;
    position: relative;
    overflow: hidden;
    background-color: white;
    color: #111;
}

.paper {
    width: 804px;
    margin: 0 auto;
    font-family: Lato, sans-serif;
    font-size: 12px;
    white-space: nowrap;
}

.authors {
    font-family: "Liberation Serif", serif;
    font-size: 14px;
    padding: 3px 0 53px;
}

.authors span {
    padding-left: 14px;
}

.dates {
    display: grid;
    grid-template-columns: 407px auto;
}

.jump {
    padding-top: 8px;
}

.doi {
    padding-left: 10px;
}

.paper a {
    color: inherit;
}

.abstract {
    width: 618px;
    margin: 54px 0 0 91px;
    padding-bottom: 9px;
    border-bottom: 2px solid #111;
    font-size: 14px;
    line-height: 19px;
}

.abstract h1 {
    font-size: 17px;
    line-height: 20px;
    padding-bottom: 2px;
    border-bottom: 2px solid #111;
}

.abstract p {
    margin-bottom: 7px;
}

.abstract p:last-child {
    margin-bottom: 0;
}

.abstract span {
    display: block;
    text-align: justify;
    text-align-last: justify;
}

.abstract span:last-child {
    width: max-content;
    text-align-last: left;
}

.hl span {
    background-color: #9dc3df;
    border-bottom: 1px solid #88adc9;
    line-height: 18px;
    color: #25445e;
}

.folio {
    font-family: "Liberation Sans", sans-serif;
    font-size: 14px;
    padding: 70px 0 0 718px;
}

.bubble {
    --accent: white;
    position: absolute;
    right: 0;
    top: 11px;
    width: 26px;
    height: 26px;
    border-radius: 50%;
    display: flex;
    align-items: center;
    justify-content: center;
    background-color: #4285ee;
    color: white;
}

.scroll {
    width: 18px;
    padding: 44px 3px 0;
    background-color: #d0d0d0;
}

.scroll i {
    display: block;
    height: 48px;
    border: 2px solid #bdbdbd;
    border-radius: 6px;
    background-color: #ebebeb;
}

/* translation panel */
.translate {
    width: 237px;
    padding: 0 11px 12px;
    display: flex;
    flex-direction: column;
    background-color: #efefef;
    color: #555;
}

.thead {
    height: 26px;
    margin: 0 -5px 0 -3px;
    display: flex;
    gap: 8px;
}

.langs {
    margin-top: 28px;
    height: 26px;
    display: flex;
    align-items: center;
    justify-content: space-between;
}

.langs label {
    width: 94px;
    height: 26px;
    padding: 0 8px;
    display: flex;
    align-items: center;
    background-color: white;
}

.langs select {
    flex: 1;
}

.tri {
    border: 3px solid transparent;
    border-top: 4px solid #777;
    border-bottom: none;
}

.tri.flip {
    border: 3px solid transparent;
    border-bottom: 4px solid #ccc;
    border-top: none;
}

.source {
    height: 26px;
    margin-top: 12px;
    padding: 0 6px 0 4px;
    display: flex;
    background-color: white;
}

.source input {
    flex: 1;
}

.go {
    height: 34px;
    margin-top: 11px;
    border-radius: 3px;
    background-color: #ec5453;
    color: white;
    font-size: 13px;
}

.card {
    margin-top: 12px;
    background-color: white;
    border-radius: 2px;
}

.result {
    flex: 1;
    padding: 0 8px 11px;
    display: flex;
    flex-direction: column;
    color: #4b4b63;
}

.rhead {
    height: 31px;
    margin: 0 -2px 6px;
    padding: 3px 5px 0;
    display: flex;
    align-items: center;
    gap: 14px;
    border-bottom: 1px solid #e2e2e2;
}

.rhead a {
    color: inherit;
    text-decoration: none;
}

.result p {
    flex: 1;
    padding-left: 2px;
    white-space: nowrap;
}

.result small {
    font-size: 11px;
    text-align: right;
    color: #cfcfcf;
}

.whole {
    height: 73px;
    padding: 11px 8px 11px 9px;
    display: flex;
    gap: 8px;
    white-space: nowrap;
}

.whole .ib {
    align-self: flex-start;
    margin: 5px 0 0 -16px;
}

.whole h2 {
    font-size: 13px;
    font-weight: normal;
    line-height: 27px;
}

.whole p {
    color: #9090ab;
}

.thumb {
    width: 54px;
    height: 50px;
}

.thumb text {
    font-size: 8px;
    fill: white;
    stroke: none;
}

/* status bar */
.status {
    height: 26px;
    flex: none;
    padding: 0 13px 0 13px;
    display: flex;
    align-items: center;
    gap: 8px;
}

.nav {
    margin-right: 16px;
}

.status .pager {
    width: 98px;
    height: 20px;
    padding-right: 12px;
    margin: 0 2px;
}

.jumpback {
    margin-left: 13px;
}

.view {
    --accent: currentColor;
    display: flex;
    gap: 3px;
}

.view .gap {
    margin-right: 12px;
}

.pct {
    margin-left: -6px;
    font-size: 12px;
}

.thick svg {
    stroke-width: 2;
}

.slider {
    appearance: none;
    width: 132px;
    height: 14px;
    background: linear-gradient(#999, #999) center / 100% 1px no-repeat;
}

.slider::-webkit-slider-thumb {
    appearance: none;
    width: 12px;
    height: 12px;
    border: 1px solid #777;
    border-radius: 50%;
    background-color: #eee;
}

/* marker layer */
.ink {
    position: absolute;
    left: 0;
    top: 0;
    fill: #00b050;
    stroke: none;
    mix-blend-mode: darken;
    pointer-events: none;
}

.redbox {
    position: absolute;
    left: 786px;
    top: 63px;
    width: 87px;
    height: 52px;
    border: 4px solid #fe0000;
}

.ghost {
    position: absolute;
    left: 879px;
    top: 112px;
    width: 30px;
    height: 30px;
    border: 8px solid rgba(240, 180, 190, 0.2);
    border-radius: 3px;
    background-color: rgba(250, 215, 220, 0.4);
}

.ime {
    position: absolute;
    left: 871px;
    top: 541px;
    height: 23px;
    padding-right: 4px;
    display: flex;
    align-items: center;
    gap: 8px;
    background-color: white;
    border: 1px solid #d7dcea;
    font-size: 13px;
    color: #1c6dc9;
}

.ime svg {
    width: 14px;
    height: 14px;
    fill: #1c6dc9;
    stroke: none;
}

.ime b {
    width: 14px;
    text-align: center;
}

.slogo {
    width: 26px;
    height: 26px;
    border-radius: 4px;
    background-color: #ee5a24;
    color: white;
    font-size: 24px;
    line-height: 26px;
    font-weight: bold;
    text-align: center;
    transform: rotate(-12deg);
}

.watermark {
    position: absolute;
    right: 32px;
    bottom: 36px;
    display: flex;
    align-items: flex-end;
    gap: 26px;
    color: rgba(235, 235, 235, 0.85);
    font-size: 36px;
    font-weight: 500;
    line-height: 52px;
}

.watermark b {
    font-family: Lato, sans-serif;
    font-weight: 900;
    font-size: 54px;
    line-height: 60px;
    transform: rotate(-4deg);
}
```
